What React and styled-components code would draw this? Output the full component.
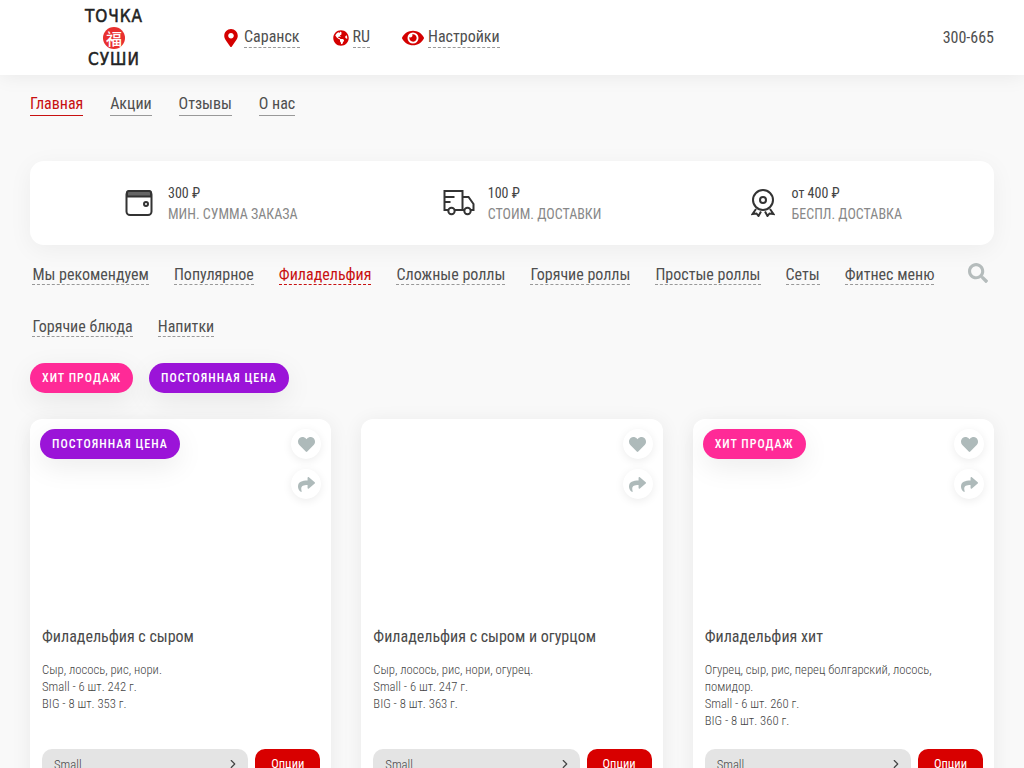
import React from 'react';
import styled, { createGlobalStyle } from 'styled-components';
import { FaHeart, FaShare, FaSearch, FaMapMarkerAlt, FaGlobeAmericas, FaEye } from 'react-icons/fa';
import { ChevronRight } from 'lucide-react';

const Global = createGlobalStyle`
  html, body { margin: 0; padding: 0; height: 768px; overflow: hidden; background: #f9f9f9; }
  body { font-family: Roboto, "Liberation Sans", sans-serif; font-stretch: 75%; font-weight: 400; color: #4a4a4a; }
  * { box-sizing: border-box; }
`;
const Page = styled.div`height: 768px; overflow: hidden;`;
const Header = styled.header`
  height: 75px; background: #fff; box-shadow: 0 0 20px rgba(0,0,0,.08);
  display: flex; align-items: center; padding: 0 30px 0 84px;
`;
const Logo = styled.div`
  width: 60px; margin-right: 78px; display: flex; flex-direction: column; align-items: center;
  font-family: "DejaVu Sans", sans-serif; color: #222; line-height: 1;
`;
const LogoWord = styled.span`font-size: 17px; font-weight: 400; font-stretch: 75%; letter-spacing: 1px; -webkit-text-stroke: .5px #222; line-height: 15px; white-space: nowrap;`;
const LogoSeal = styled.span`
  width: 22px; height: 22px; margin: 3px 0; border-radius: 50%; background: #e8302f; color: #fff;
  display: flex; align-items: center; justify-content: center; font: 500 16px "Noto Sans CJK SC", sans-serif;
`;
const HeadItem = styled.div`display: flex; align-items: center; gap: ${p => p.$gap || 6}px; margin-right: ${p => p.$mr || 0}px; color: #d40000;`;
const Dashed = styled.span`
  font-size: 16px; line-height: 20px; color: #4f4f4f; border-bottom: 1px dashed #999; white-space: nowrap;
`;
const Phone = styled.div`margin-left: auto; font-size: 16px; color: #4f4f4f;`;
const Nav = styled.nav`display: flex; gap: 26.8px; padding: 19px 30px 0;`;
const NavLink = styled.a`
  font-size: 16px; line-height: 20px; padding-bottom: 1px; color: ${p => p.$active ? '#c81010' : '#4f4f4f'};
  border-bottom: 1px solid ${p => p.$active ? '#c81010' : '#999'};
`;
const InfoCard = styled.section`
  margin: 45px 30px 0; height: 84px; background: #fff; border-radius: 14px; box-shadow: 0 5px 25px rgba(0,0,0,.05);
  display: flex; align-items: center; justify-content: space-between; padding: 0 92px 0 95px;
`;
const InfoItem = styled.div`display: flex; align-items: center; gap: ${p => p.$gap}px; margin-right: ${p => p.$mr || 0}px; color: #333;`;
const InfoText = styled.div`display: flex; flex-direction: column; gap: 4px; padding-top: 2px;`;
const InfoValue = styled.div`font-size: 14px; line-height: 17px; color: #444;`;
const InfoLabel = styled.div`font-size: 14px; line-height: 17px; color: #888; white-space: nowrap;`;
const Tabs = styled.div`display: flex; flex-wrap: wrap; align-items: center; gap: 0 25px; padding: 4px 30px 0 32.4px; position: relative; width: 970px;`;
const Tab = styled.a`height: 52px; display: flex; align-items: center;`;
const TabText = styled.span`
  font-size: 16px; line-height: 19px; white-space: nowrap; color: ${p => p.$active ? '#c81010' : '#4f4f4f'};
  border-bottom: 1px dashed ${p => p.$active ? '#c81010' : '#999'};
`;
const SearchWrap = styled.span`position: absolute; left: 968px; top: 18px; color: #b5bcbc; display: flex;`;
const Badges = styled.div`display: flex; gap: 16px; padding: 10px 30px 0;`;
const Badge = styled.span`
  height: 30px; padding: 0 12px; border-radius: 15px; display: inline-flex; align-items: center; color: #fff;
  font-size: 12px; font-weight: 500; letter-spacing: 1px; white-space: nowrap;
  background: ${p => p.$kind === 'hit' ? '#ff2a97' : '#9b14d8'};
  box-shadow: 0 8px 28px rgba(0,0,0,.08);
`;
const Grid = styled.div`display: grid; grid-template-columns: repeat(3, 1fr); gap: 30px; padding: 26px 30px 0;`;
const Card = styled.article`
  position: relative; height: 400px; background: #fff; border-radius: 12px; box-shadow: 0 3px 20px rgba(0,0,0,.07);
  padding: 208px 11px 0 12px; display: flex; flex-direction: column;
`;
const CardBadge = styled.div`position: absolute; left: 10px; top: 10px;`;
const RoundBtns = styled.div`position: absolute; right: 10px; top: 10px; display: flex; flex-direction: column; gap: 10px;`;
const RoundBtn = styled.span`
  width: 30px; height: 30px; border-radius: 50%; background: #fff; box-shadow: 0 2px 10px rgba(0,0,0,.08);
  display: flex; align-items: center; justify-content: center; color: #aebaba;
`;
const Title = styled.h3`margin: 0; font-size: 16px; line-height: 20px; font-weight: 400; color: #4a4a4a;`;
const Desc = styled.p`margin: 14px 0 0; font-size: 12.7px; line-height: 17px; font-weight: 300; color: #444;`;
const Controls = styled.div`position: absolute; left: 12px; right: 11px; top: 330px; display: flex; gap: 7px;`;
const Select = styled.div`
  flex: 1; height: 38px; border-radius: 10px; background: #e4e4e4; padding: 8px 8px 0 12px;
  display: flex; justify-content: space-between; font-size: 12.7px; font-weight: 300; line-height: 16px; color: #444;
`;
const Options = styled.button`
  width: 65px; height: 30px; border: 0; border-radius: 10px; background: #d80000; color: #fff; padding: 0;
  font-family: Roboto, sans-serif; font-stretch: 75%; font-size: 12.5px; line-height: 18px;
`;

const Wallet = () => (
  <svg width="28" height="28" viewBox="0 0 28 28" fill="none" stroke="#333" strokeWidth="2">
    <rect x="1.5" y="2" width="25" height="24" rx="3.5" />
    <path d="M2 7.5h24V4a2 2 0 0 0-2-2H4a2 2 0 0 0-2 2z" fill="#666" />
    <circle cx="21" cy="15" r="2" />
  </svg>
);
const Truck = () => (
  <svg width="32" height="28" viewBox="0 0 32 28" fill="none" stroke="#333" strokeWidth="2">
    <path d="M6 21H1.5V2h18v19H11M1.5 8h10M1.5 13h6M19.5 8h6l5 7v6h-3M19.5 21h2" />
    <circle cx="8.5" cy="22" r="3.2" />
    <circle cx="24.5" cy="22" r="3.2" />
  </svg>
);
const Award = () => (
  <svg width="24" height="28" viewBox="0 0 24 28" fill="none" stroke="#333" strokeWidth="2">
    <circle cx="12" cy="11" r="10" />
    <circle cx="12" cy="11" r="3" />
    <path d="M5 20l-3.5 5 4-.5 2 2.5 2.5-4.5M19 20l3.5 5-4-.5-2 2.5-2.5-4.5" />
  </svg>
);

const tabs = ['Мы рекомендуем','Популярное','Филадельфия','Сложные роллы','Горячие роллы','Простые роллы','Сеты','Фитнес меню','Горячие блюда','Напитки'];
const products = [
  { title: 'Филадельфия с сыром', badge: 'const', lines: ['Сыр, лосось, рис, нори.','Small - 6 шт. 242 г.','BIG - 8 шт. 353 г.'] },
  { title: 'Филадельфия с сыром и огурцом', lines: ['Сыр, лосось, рис, нори, огурец.','Small - 6 шт. 247 г.','BIG - 8 шт. 363 г.'] },
  { title: 'Филадельфия хит', badge: 'hit', lines: ['Огурец, сыр, рис, перец болгарский, лосось,','помидор.','Small - 6 шт. 260 г.','BIG - 8 шт. 360 г.'] },
];
const BadgeEl = ({ kind }) => <Badge $kind={kind}>{kind === 'hit' ? 'ХИТ ПРОДАЖ' : 'ПОСТОЯННАЯ ЦЕНА'}</Badge>;

export default function App() {
  return (
    <Page>
      <Global />
      <Header>
        <Logo>
          <LogoWord>ТОЧКА</LogoWord>
          <LogoSeal>福</LogoSeal>
          <LogoWord>СУШИ</LogoWord>
        </Logo>
        <HeadItem $mr={33} $gap={4}><FaMapMarkerAlt size={18} /><Dashed>Саранск</Dashed></HeadItem>
        <HeadItem $mr={32} $gap={4}><FaGlobeAmericas size={16} /><Dashed>RU</Dashed></HeadItem>
        <HeadItem $gap={4}><FaEye size={22} /><Dashed>Настройки</Dashed></HeadItem>
        <Phone>300-665</Phone>
      </Header>
      <Nav>
        <NavLink $active>Главная</NavLink>
        <NavLink>Акции</NavLink>
        <NavLink>Отзывы</NavLink>
        <NavLink>О нас</NavLink>
      </Nav>
      <InfoCard>
        <InfoItem $gap={15}><Wallet /><InfoText><InfoValue>300 ₽</InfoValue><InfoLabel>МИН. СУММА ЗАКАЗА</InfoLabel></InfoText></InfoItem>
        <InfoItem $gap={13} $mr={4}><Truck /><InfoText><InfoValue>100 ₽</InfoValue><InfoLabel>СТОИМ. ДОСТАВКИ</InfoLabel></InfoText></InfoItem>
        <InfoItem $gap={17}><Award /><InfoText><InfoValue>от 400 ₽</InfoValue><InfoLabel>БЕСПЛ. ДОСТАВКА</InfoLabel></InfoText></InfoItem>
      </InfoCard>
      <Tabs>
        {tabs.map((t, i) => <Tab key={t}><TabText $active={i === 2}>{t}</TabText></Tab>)}
        <SearchWrap><FaSearch size={20} /></SearchWrap>
      </Tabs>
      <Badges><BadgeEl kind="hit" /><BadgeEl kind="const" /></Badges>
      <Grid>
        {products.map(p => (
          <Card key={p.title}>
            {p.badge && <CardBadge><BadgeEl kind={p.badge} /></CardBadge>}
            <RoundBtns>
              <RoundBtn><FaHeart size={17} /></RoundBtn>
              <RoundBtn><FaShare size={17} /></RoundBtn>
            </RoundBtns>
            <Title>{p.title}</Title>
            <Desc>{p.lines.map(l => <React.Fragment key={l}>{l}<br /></React.Fragment>)}</Desc>
            <Controls>
              <Select><span>Small</span><ChevronRight size={14} /></Select>
              <Options>Опции</Options>
            </Controls>
          </Card>
        ))}
      </Grid>
    </Page>
  );
}
